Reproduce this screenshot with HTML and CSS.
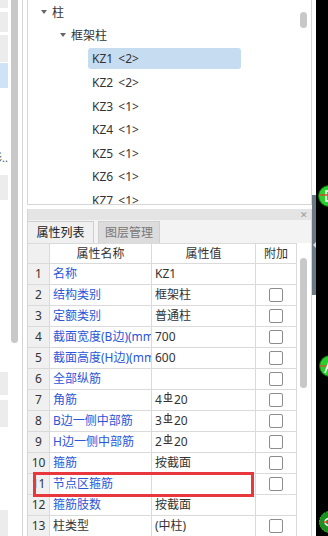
FILE: index.html
```html
<!DOCTYPE html>
<html lang="zh">
<head>
<meta charset="utf-8">
<link rel="stylesheet" href="styles.css">
</head>
<body>
<div class="app">
  <div class="side">
    <div class="side-list">
      <div class="si gray h8"></div>
      <div class="si gray h20 mt4"></div>
      <div class="si gray h27 mt3"></div>
      <div class="si blue h25 mt1"></div>
      <div class="si-text"><span>形..</span></div>
      <div class="si gray h25 mt10"></div>
      <div class="si gray h23 mt172"></div>
      <div class="si gray h27 mt5"></div>
      <div class="si gray h26 mt83"></div>
    </div>
    <div class="side-scroll"><div class="thumb"></div></div>
  </div>

  <div class="main">
    <div class="tree">
      <div class="tree-rows">
        <div class="node l0"><span class="caret"></span><span>柱</span></div>
        <div class="node l1"><span class="caret"></span><span>框架柱</span></div>
        <div class="node l2"><span class="leaf sel">KZ1 &lt;2&gt;</span></div>
        <div class="node l2"><span class="leaf">KZ2 &lt;2&gt;</span></div>
        <div class="node l2"><span class="leaf">KZ3 &lt;1&gt;</span></div>
        <div class="node l2"><span class="leaf">KZ4 &lt;1&gt;</span></div>
        <div class="node l2"><span class="leaf">KZ5 &lt;1&gt;</span></div>
        <div class="node l2"><span class="leaf">KZ6 &lt;1&gt;</span></div>
        <div class="node l2"><span class="leaf">KZ7 &lt;1&gt;</span></div>
      </div>
      <div class="tree-scroll"><div class="thumb"></div></div>
    </div>

    <div class="props">
      <div class="props-title"><span class="close">✕</span></div>
      <div class="tabs">
        <div class="tab active">属性列表</div>
        <div class="tab">图层管理</div>
      </div>
      <div class="grid-wrap">
        <div class="grid">
          <div class="c idx hd"></div><div class="c hd center">属性名称</div><div class="c hd center">属性值</div><div class="c hd center">附加</div>

          <div class="c idx">1</div><div class="c nm">名称</div><div class="c val">KZ1</div><div class="c add"></div>
          <div class="c idx">2</div><div class="c nm">结构类别</div><div class="c val">框架柱</div><div class="c add"><span class="cb"></span></div>
          <div class="c idx">3</div><div class="c nm">定额类别</div><div class="c val">普通柱</div><div class="c add"><span class="cb"></span></div>
          <div class="c idx">4</div><div class="c nm">截面宽度(B边)(mm)</div><div class="c val">700</div><div class="c add"><span class="cb"></span></div>
          <div class="c idx">5</div><div class="c nm">截面高度(H边)(mm)</div><div class="c val">600</div><div class="c add"><span class="cb"></span></div>
          <div class="c idx">6</div><div class="c nm">全部纵筋</div><div class="c val"></div><div class="c add"><span class="cb"></span></div>
          <div class="c idx">7</div><div class="c nm">角筋</div><div class="c val">4<svg class="rb" viewBox="0 0 10 11" width="10" height="11"><path d="M2 2.5h6v4.5h-6z M5 0v9.5 M0.5 9.5h9" fill="none" stroke="#333" stroke-width="1"/></svg>20</div><div class="c add"><span class="cb"></span></div>
          <div class="c idx">8</div><div class="c nm">B边一侧中部筋</div><div class="c val">3<svg class="rb" viewBox="0 0 10 11" width="10" height="11"><path d="M2 2.5h6v4.5h-6z M5 0v9.5 M0.5 9.5h9" fill="none" stroke="#333" stroke-width="1"/></svg>20</div><div class="c add"><span class="cb"></span></div>
          <div class="c idx">9</div><div class="c nm">H边一侧中部筋</div><div class="c val">2<svg class="rb" viewBox="0 0 10 11" width="10" height="11"><path d="M2 2.5h6v4.5h-6z M5 0v9.5 M0.5 9.5h9" fill="none" stroke="#333" stroke-width="1"/></svg>20</div><div class="c add"><span class="cb"></span></div>
          <div class="c idx">10</div><div class="c nm">箍筋</div><div class="c val">按截面</div><div class="c add"><span class="cb"></span></div>
          <div class="c idx">11</div><div class="c nm">节点区箍筋</div><div class="c val"></div><div class="c add"><span class="cb"></span></div>
          <div class="c idx">12</div><div class="c nm">箍筋肢数</div><div class="c val">按截面</div><div class="c add"></div>
          <div class="c idx">13</div><div class="c nm black">柱类型</div><div class="c val">(中柱)</div><div class="c add"><span class="cb"></span></div>
        </div>
        <div class="grid-scroll"><div class="thumb"></div></div>
        <div class="mark"></div>
      </div>
    </div>
  </div>

  <div class="gutter">
    <div class="gutter-top"></div>
    <div class="gutter-handle"><span class="arrow"></span></div>
  </div>

  <div class="canvas">
    <svg class="ico ico1" width="24" height="24" viewBox="0 0 24 24">
      <circle cx="12" cy="12" r="10.5" fill="#2ecc2e" stroke="#0b6b0b" stroke-width="1"/>
      <rect x="9" y="7" width="8" height="10" fill="none" stroke="#fff" stroke-width="1.6"/>
      <path d="M3 11h8" stroke="#e23b2b" stroke-width="1.4"/>
    </svg>
    <svg class="ico ico2" width="24" height="24" viewBox="0 0 24 24">
      <circle cx="12" cy="12" r="10.5" fill="#2ecc2e" stroke="#0b6b0b" stroke-width="1"/>
      <path d="M2 12h10" stroke="#c0602b" stroke-width="1.6"/>
      <path d="M7 19l5-14 5 14 M9 14h6" fill="none" stroke="#fff" stroke-width="1.6"/>
    </svg>
    <svg class="ico ico3" width="24" height="24" viewBox="0 0 24 24">
      <circle cx="12" cy="12" r="10.5" fill="#1f8f1f" stroke="#2ecc2e" stroke-width="1" stroke-dasharray="2 1"/>
      <ellipse cx="13" cy="12" rx="6" ry="4" fill="none" stroke="#fff" stroke-width="1.6"/>
      <path d="M6 12h8" stroke="#e23b2b" stroke-width="1.4"/>
    </svg>
  </div>
</div>
</body>
</html>
```

FILE: styles.css
```css
* { box-sizing: border-box; }
html, body { margin: 0; padding: 0; background: #fff; }
body {
  font-family: "Noto Sans", "Noto Sans CJK SC", sans-serif;
  font-size: 12px;
  color: #333;
}
.app {
  width: 328px;
  height: 536px;
  display: flex;
  overflow: hidden;
}

/* left strip */
.side {
  width: 23px;
  flex: none;
  display: flex;
  border-right: 1px solid #d4d4d4;
}
.side-list {
  width: 8px;
  display: flex;
  flex-direction: column;
}
.si { width: 8px; flex: none; }
.gray { background: #ececec; }
.blue { background: #cfe3f8; }
.h8 { height: 8px; } .h20 { height: 20px; } .h23 { height: 23px; } .h25 { height: 25px; }
.h26 { height: 26px; } .h27 { height: 27px; }
.mt1 { margin-top: 1px; } .mt3 { margin-top: 3px; } .mt4 { margin-top: 4px; } .mt5 { margin-top: 5px; }
.mt10 { margin-top: 10px; } .mt83 { margin-top: 83px; } .mt172 { margin-top: 172px; }
.si-text {
  margin-top: 63px;
  height: 14px;
  width: 8px;
  flex: none;
  overflow: hidden;
  display: flex;
  justify-content: flex-end;
  font-size: 11px;
  line-height: 14px;
  color: #555;
}
.si-text span { flex: none; white-space: nowrap; }
.side-scroll {
  width: 7px;
  margin-left: 3px;
}
.side-scroll .thumb {
  width: 7px;
  height: 343px;
  background: #c8c8c8;
  border-radius: 0 0 4px 4px;
}

/* main */
.main {
  width: 285px;
  flex: none;
  margin-left: 4px;
  display: flex;
  flex-direction: column;
}
.tree {
  height: 205px;
  flex: none;
  border-left: 1px solid #d6d6d6;
  border-right: 1px solid #d6d6d6;
  border-bottom: 1px solid #d6d6d6;
  display: flex;
  overflow: hidden;
}
.tree-rows { flex: 1; }
.node {
  height: 23.6px;
  display: flex;
  align-items: center;
  white-space: nowrap;
  color: #333;
}
.node.l0 { padding-left: 12px; }
.node.l1 { padding-left: 31px; }
.node.l2 { padding-left: 60px; }
.caret {
  width: 8px;
  height: 8px;
  margin-right: 4px;
  display: flex;
  align-items: center;
  justify-content: center;
}
.caret::before {
  content: "";
  border-left: 3px solid transparent;
  border-right: 3px solid transparent;
  border-top: 4px solid #666;
}
.leaf {
  display: block;
  width: 153px;
  height: 21px;
  line-height: 21px;
  padding-left: 4px;
  border-radius: 3px;
  word-spacing: 2px;
}
.leaf.sel { background: #c6dcf1; }
.tree-scroll { width: 15px; flex: none; }
.tree-scroll .thumb {
  margin: 12px 0 0 4px;
  width: 7px;
  height: 16px;
  border-radius: 4px;
  background: #c8c8c8;
}

/* properties */
.props {
  margin-top: 4px;
  flex: 1;
  border-left: 1px solid #d6d6d6;
  border-right: 1px solid #d6d6d6;
  display: flex;
  flex-direction: column;
}
.props-title {
  height: 11px;
  flex: none;
  background: #e4e4e4;
  display: flex;
  justify-content: flex-end;
  align-items: center;
  padding-right: 3px;
}
.close {
  font-size: 9px;
  line-height: 11px;
  color: #999;
}
.tabs {
  height: 23px;
  flex: none;
  background: #f3f3f3;
  display: flex;
  align-items: flex-end;
  gap: 4px;
}
.tab {
  height: 22px;
  line-height: 21px;
  padding: 0 6px;
  border: 1px solid #cfcfcf;
  border-bottom: none;
  background: #dcdcdc;
  color: #777;
  font-size: 12px;
}
.tab.active {
  width: 66px;
  text-align: center;
  padding: 0;
  background: #f0f0f0;
  color: #222;
  border-left: none;
}
.grid-wrap {
  position: relative;
  display: flex;
  flex: 1;
}
.grid {
  display: grid;
  grid-template-columns: 22px 102px 104px 41px;
  grid-auto-rows: 21px;
  width: 269px;
  align-content: start;
}
.c {
  border-right: 1px solid #dadada;
  border-bottom: 1px solid #dadada;
  line-height: 20px;
  white-space: nowrap;
  overflow: hidden;
  background: #fff;
}
.hd { border-top: 1px solid #dadada; line-height: 19px; color: #333; }
.center { text-align: center; }
.idx { background: #f0f0f0; text-align: center; color: #333; }
.nm { color: #2b56d9; padding-left: 3px; text-overflow: clip; }
.nm.black { color: #333; }
.val { padding-left: 3px; color: #333; }
.add { display: flex; align-items: center; justify-content: center; }
.cb {
  width: 14px;
  height: 14px;
  border: 1px solid #8c8c8c;
  border-radius: 2px;
  background: #fff;
}
.rb {
  vertical-align: 1px;
  margin: 0 1px;
}
.grid-scroll { width: 14px; flex: none; }
.grid-scroll .thumb {
  margin: 15px 0 0 3px;
  width: 7px;
  height: 130px;
  border-radius: 4px;
  background: #c8c8c8;
}
.mark {
  position: absolute;
  left: 5px;
  top: 229px;
  width: 221px;
  height: 25px;
  border: 3px solid #e8383d;
}

/* gutter + canvas */
.gutter {
  width: 4px;
  flex: none;
  display: flex;
  flex-direction: column;
}
.gutter-top { height: 195px; flex: none; }
.gutter-handle {
  height: 100px;
  flex: none;
  background: #6c7884;
  display: flex;
  justify-content: center;
  padding-top: 47px;
}
.arrow {
  width: 0; height: 0;
  border-top: 3px solid transparent;
  border-bottom: 3px solid transparent;
  border-right: 3px solid #d8dde2;
}
.canvas {
  width: 12px;
  flex: none;
  background: #000;
  position: relative;
  overflow: hidden;
}
.ico { position: absolute; }
.ico1 { left: 1px; top: 184px; }
.ico2 { left: 2px; top: 354px; }
.ico3 { left: 2px; top: 510px; }
```
